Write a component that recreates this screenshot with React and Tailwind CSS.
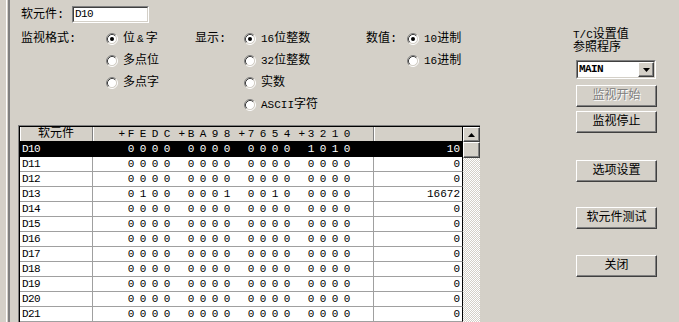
import React from 'react';

const data = [
  ['D10', '0000', '0000', '0000', '1010', '10'],
  ['D11', '0000', '0000', '0000', '0000', '0'],
  ['D12', '0000', '0000', '0000', '0000', '0'],
  ['D13', '0100', '0001', '0010', '0000', '16672'],
  ['D14', '0000', '0000', '0000', '0000', '0'],
  ['D15', '0000', '0000', '0000', '0000', '0'],
  ['D16', '0000', '0000', '0000', '0000', '0'],
  ['D17', '0000', '0000', '0000', '0000', '0'],
  ['D18', '0000', '0000', '0000', '0000', '0'],
  ['D19', '0000', '0000', '0000', '0000', '0'],
  ['D20', '0000', '0000', '0000', '0000', '0'],
  ['D21', '0000', '0000', '0000', '0000', '0'],
];

/* ── classic win radio ── */
function Radio({ on }) {
  return (
    <svg width="12" height="12" viewBox="0 0 12 12" className="shrink-0">
      <circle cx="6" cy="6" r="4.5" fill="#fff" />
      <path d="M2.11 9.89 A5.5 5.5 0 0 1 9.89 2.11" fill="none" stroke="#808080" strokeWidth="1" />
      <path d="M9.89 2.11 A5.5 5.5 0 0 1 2.11 9.89" fill="none" stroke="#fff" strokeWidth="1" />
      <path d="M2.82 9.18 A4.5 4.5 0 0 1 9.18 2.82" fill="none" stroke="#404040" strokeWidth="1" />
      <path d="M9.18 2.82 A4.5 4.5 0 0 1 2.82 9.18" fill="none" stroke="#d4d0c8" strokeWidth="1" />
      {on && <circle cx="6" cy="6" r="2" fill="#000" />}
    </svg>
  );
}

function Opt({ on, children }) {
  return (
    <div className="flex h-[22px] items-center">
      <Radio on={on} />
      <span className="ml-[5px] whitespace-nowrap text-[12px] leading-[14px]">{children}</span>
    </div>
  );
}

function A({ children }) {
  return <span className="text-[11px]">{children}</span>;
}

function Btn({ children, disabled }) {
  return (
    <div
      className={
        disabled
          ? "flex h-[22px] w-[81px] items-center justify-center border border-t-white border-l-white border-r-[#404040] border-b-[#404040] shadow-[inset_-1px_-1px_0_#808080] text-[12px] text-[#808080] [text-shadow:1px_1px_0_#fff]"
          : "flex h-[22px] w-[81px] items-center justify-center border border-t-white border-l-white border-r-[#404040] border-b-[#404040] shadow-[inset_-1px_-1px_0_#808080] text-[12px] text-black"
      }
    >
      {children}
    </div>
  );
}

function Bits({ groups, head }) {
  return (
    <div className="flex pl-[20px]">
      {groups.map((g, i) => (
        <div key={i} className="flex">
          <span className="w-[12px] text-right">{head ? '+' : ''}</span>
          {g.split('').map((c, j) => (
            <span key={j} className="w-[12px] text-center">{c}</span>
          ))}
        </div>
      ))}
    </div>
  );
}

export default function App() {
  return (
    <div className="flex h-[322px] w-[679px] overflow-hidden bg-[#d4d0c8] font-['Liberation_Mono','Noto_Sans_CJK_SC',monospace] text-black">
      {/* ── left edge ── */}
      <div className="w-[10px] shrink-0 border-r-2 border-[#808080] shadow-[inset_-1px_0_0_#d4d0c8,inset_-2px_0_0_#fff]" />

      {/* ── left column ── */}
      <div className="flex w-[563px] shrink-0 flex-col pt-[6px]">
        <div className="pl-[11px]">
          <div className="flex h-[17px] items-center">
            <span className="w-[51px] text-[12px] leading-[14px]">软元件:</span>
            <div className="flex h-[17px] w-[77px] border border-t-[#808080] border-l-[#808080] border-r-white border-b-white">
              <div className="flex flex-1 items-center border border-t-[#404040] border-l-[#404040] border-r-[#d4d0c8] border-b-[#d4d0c8] bg-white pl-[1px] text-[11px] tracking-[-0.6px]">
                D10
              </div>
            </div>
          </div>

          <div className="mt-[5px] flex">
            <div className="flex w-[174px]">
              <div className="flex h-[22px] w-[85px] items-center text-[12px]">监视格式:</div>
              <div className="flex flex-col">
                <Opt on>位<span className="px-[2px] text-[11px]">&</span>字</Opt>
                <Opt>多点位</Opt>
                <Opt>多点字</Opt>
              </div>
            </div>
            <div className="flex w-[171px]">
              <div className="flex h-[22px] w-[49px] items-center text-[12px]">显示:</div>
              <div className="flex flex-col">
                <Opt on><A>16</A>位整数</Opt>
                <Opt><A>32</A>位整数</Opt>
                <Opt>实数</Opt>
                <Opt><A>ASCII</A>字符</Opt>
              </div>
            </div>
            <div className="flex">
              <div className="flex h-[22px] w-[41px] items-center text-[12px]">数值:</div>
              <div className="flex flex-col">
                <Opt on><A>10</A>进制</Opt>
                <Opt><A>16</A>进制</Opt>
              </div>
            </div>
          </div>
        </div>

        {/* ── device table ── */}
        <div className="ml-[8px] mt-[9px] flex w-[462px] border-l border-t border-[#808080]">
          <div className="flex border-l border-t border-black">
            <div className="flex w-[443px] flex-col text-[11px] leading-[14px]">
              <div className="flex h-[15px] border-b border-black bg-[#d4d0c8]">
                <div className="w-[73px] border-r border-[#808080] text-center text-[12px] shadow-[inset_1px_0_0_#fff]">软元件</div>
                <div className="w-[281px] border-r border-[#808080] shadow-[inset_1px_0_0_#fff]">
                  <Bits groups={['FEDC', 'BA98', '7654', '3210']} head />
                </div>
                <div className="w-[89px] border-r border-black shadow-[inset_1px_0_0_#fff]" />
              </div>
              {data.map((r, i) => {
                const sel = i === 0;
                return (
                  <div key={r[0]} className={sel ? "flex h-[15px] bg-black text-white" : "flex h-[15px] bg-white text-black"}>
                    <div className={sel ? "w-[73px] border-r border-b border-black pl-[2px] tracking-[-0.6px]" : "w-[73px] border-r border-b border-[#a0a0a0] pl-[2px] tracking-[-0.6px]"}>{r[0]}</div>
                    <div className={sel ? "w-[281px] border-r border-b border-black" : "w-[281px] border-r border-b border-[#a0a0a0]"}>
                      <Bits groups={r.slice(1, 5)} />
                    </div>
                    <div className={sel ? "w-[89px] border-r border-b border-black pr-[2px] text-right" : "w-[89px] border-b border-r border-b-[#a0a0a0] border-r-black pr-[2px] text-right"}>{r[5]}</div>
                  </div>
                );
              })}
            </div>

            {/* ── scrollbar ── */}
            <div className="flex w-[17px] flex-col">
              <div className="flex h-[15px] items-center justify-center border border-t-white border-l-white border-r-[#404040] border-b-[#404040] bg-[#d4d0c8] shadow-[inset_-1px_-1px_0_#808080]">
                <svg width="7" height="4" viewBox="0 0 7 4"><path d="M3.5 0 L7 4 L0 4 Z" fill="#000" /></svg>
              </div>
              <div className="h-[16px] border border-t-white border-l-white border-r-[#404040] border-b-[#404040] bg-[#d4d0c8] shadow-[inset_-1px_-1px_0_#808080]" />
              <div className="flex-1 bg-[repeating-conic-gradient(#fff_0_25%,#d4d0c8_0_50%)] bg-[length:2px_2px]" />
            </div>
          </div>
        </div>
      </div>

      {/* ── right column ── */}
      <div className="flex flex-col pt-[29px]">
        <div className="text-[12px] leading-[13px]">
          <div><A>T/C</A>设置值</div>
          <div>参照程序</div>
        </div>
        <div className="ml-[3px] mt-[5px] flex h-[19px] w-[80px] border border-t-[#808080] border-l-[#808080] border-r-white border-b-white">
          <div className="flex flex-1 items-center border border-t-[#404040] border-l-[#404040] border-r-[#d4d0c8] border-b-[#d4d0c8] bg-white">
            <span className="pl-[1px] text-[11px] font-bold tracking-[-0.6px]">MAIN</span>
            <div className="ml-auto flex h-full w-[16px] items-center justify-center border border-t-white border-l-white border-r-[#404040] border-b-[#404040] bg-[#d4d0c8] shadow-[inset_-1px_-1px_0_#808080]">
              <svg width="7" height="4" viewBox="0 0 7 4"><path d="M0 0 L7 0 L3.5 4 Z" fill="#000" /></svg>
            </div>
          </div>
        </div>
        <div className="ml-[3px] mt-[6px] flex flex-col">
          <Btn disabled>监视开始</Btn>
          <div className="mt-[4px]"><Btn>监视停止</Btn></div>
          <div className="mt-[27px]"><Btn>选项设置</Btn></div>
          <div className="mt-[25px]"><Btn>软元件测试</Btn></div>
          <div className="mt-[26px]"><Btn>关闭</Btn></div>
        </div>
      </div>
    </div>
  );
}
